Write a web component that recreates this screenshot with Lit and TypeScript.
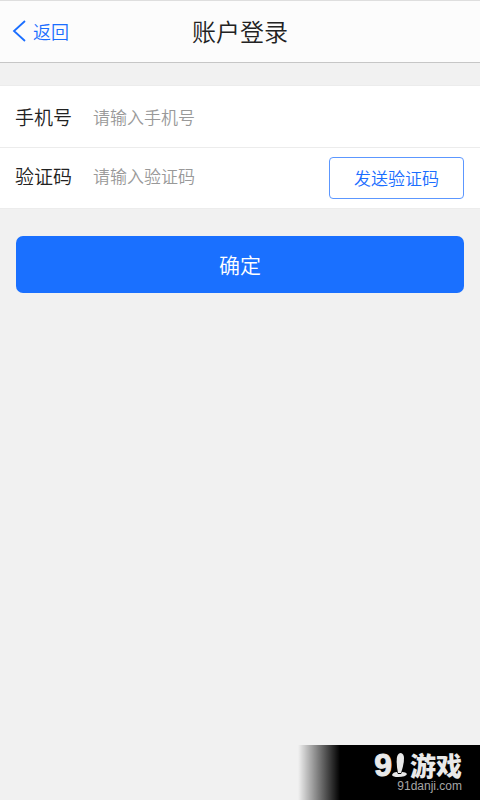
import { LitElement, html, css } from "lit";
import { customElement } from "lit/decorators.js";

@customElement("site-mark")
class SiteMark extends LitElement {
  static styles = css`
    :host {
      display: flex;
      flex-direction: column;
      align-items: flex-end;
      box-sizing: border-box;
      height: 55px;
      padding: 6px 18px 0 0;
      background: linear-gradient(to right, rgba(0, 0, 0, 0), #000 42px);
      color: #e9e9e9;
      white-space: nowrap;
    }
    .brand {
      display: flex;
      align-items: center;
      height: 28px;
    }
    .nine {
      font: bold 32px/28px "Liberation Sans", Arial, sans-serif;
      -webkit-text-stroke: 1px #e9e9e9;
    }
    .pin {
      width: 16px;
      height: 28px;
      display: block;
      margin-right: 2px;
    }
    .name {
      font: 900 26px/28px "Noto Sans CJK SC", sans-serif;
    }
    .domain {
      font: 12px/14px "Liberation Sans", Arial, sans-serif;
      color: #a6a6a6;
    }
  `;

  render() {
    return html`
      <div class="brand">
        <span class="nine">9</span>
        <svg class="pin" viewBox="0 0 16 28" aria-hidden="true">
          <path d="M5 6Q6 2 9 2Q12 3 12 7Q12 14 9 22L6 22Q4 13 5 6Z" fill="#e9e9e9" />
          <path d="M0 24Q1 21 5 21L6 23L9 23L10 21Q14 21 15 23Q14 26 6 26Q1 26 0 24Z" fill="#e9e9e9" />
        </svg>
        <span class="name">游戏</span>
      </div>
      <span class="domain">91danji.com</span>
    `;
  }
}

@customElement("app-root")
class AppRoot extends LitElement {
  static styles = css`
    :host {
      display: block;
      position: relative;
      min-height: 100vh;
      box-sizing: border-box;
      background: #f1f1f1;
      color: #222;
      font-family: "Noto Sans CJK SC", sans-serif;
      font-weight: 350;
    }
    .bar {
      display: grid;
      grid-template-columns: 1fr auto 1fr;
      align-items: center;
      box-sizing: border-box;
      height: 63px;
      padding: 0 12px 2px;
      background: #fcfcfc;
      border-top: 1px solid #dedede;
      border-bottom: 1px solid #c6c6c6;
    }
    .back {
      display: flex;
      align-items: center;
      gap: 7px;
      color: #1a6eff;
      font-size: 18px;
      line-height: 24px;
      text-decoration: none;
    }
    .chevron {
      width: 14px;
      height: 22px;
    }
    .title {
      margin: 0;
      font-size: 24px;
      line-height: 36px;
      font-weight: 350;
    }
    .fields {
      margin-top: 22px;
      background: #fff;
      border-top: 1px solid #ececec;
      border-bottom: 1px solid #ececec;
    }
    .row {
      display: flex;
      align-items: center;
      box-sizing: border-box;
      height: 61px;
      padding: 0 16px 0 15px;
    }
    .row + .row {
      border-top: 1px solid #ececec;
    }
    .label,
    .input {
      padding: 0 0 4px;
    }
    .row:first-child .label,
    .row:first-child .input {
      padding-bottom: 0;
    }
    .label {
      width: 78px;
      font-size: 19px;
      line-height: 28px;
    }
    .input {
      flex: 1;
      min-width: 0;
      border: 0;
      outline: 0;
      background: transparent;
      color: #222;
      font: 350 17px/28px "Noto Sans CJK SC", sans-serif;
    }
    .input::placeholder {
      color: #999;
      opacity: 1;
    }
    .send {
      box-sizing: border-box;
      width: 135px;
      height: 42px;
      padding: 0;
      border: 1px solid #5c97ff;
      border-radius: 4px;
      background: #fff;
      color: #1a6eff;
      font: 350 17px/28px "Noto Sans CJK SC", sans-serif;
    }
    .actions {
      padding: 27px 16px;
    }
    .submit {
      display: block;
      width: 100%;
      height: 57px;
      padding: 0 0 2px;
      border: 0;
      border-radius: 7px;
      background: #1a70ff;
      color: #fff;
      font: 350 21px/30px "Noto Sans CJK SC", sans-serif;
    }
    .mark {
      position: absolute;
      right: 0;
      bottom: 0;
      width: 182px;
    }
  `;

  render() {
    return html`
      <header class="bar">
        <a class="back" href="#">
          <svg class="chevron" viewBox="0 0 14 22" fill="none" stroke="#1a6eff" stroke-width="1.8" aria-hidden="true">
            <path d="M13 1L2 11L13 21" />
          </svg>
          返回
        </a>
        <h1 class="title">账户登录</h1>
      </header>
      <form @submit=${(e: Event) => e.preventDefault()}>
        <div class="fields">
          <div class="row">
            <label class="label" for="phone">手机号</label>
            <input class="input" id="phone" type="tel" placeholder="请输入手机号" />
          </div>
          <div class="row">
            <label class="label" for="code">验证码</label>
            <input class="input" id="code" type="text" placeholder="请输入验证码" />
            <button class="send" type="button">发送验证码</button>
          </div>
        </div>
        <div class="actions">
          <button class="submit" type="submit">确定</button>
        </div>
      </form>
      <site-mark class="mark"></site-mark>
    `;
  }
}
